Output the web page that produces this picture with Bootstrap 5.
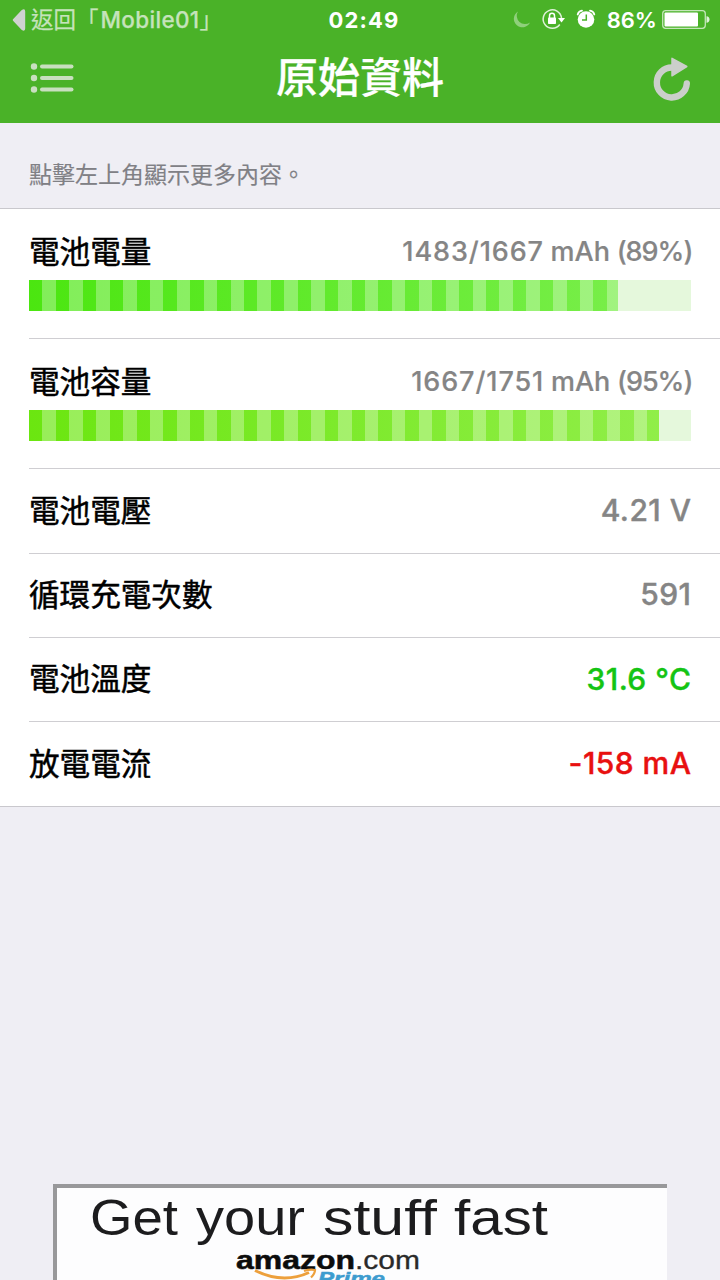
<!DOCTYPE html>
<html lang="zh-Hant">
<head>
<meta charset="utf-8">
<meta name="viewport" content="width=device-width, initial-scale=1">
<title>原始資料</title>
<link href="https://cdn.jsdelivr.net/npm/bootstrap@5.3.0/dist/css/bootstrap.min.css" rel="stylesheet">
<style>
body{font-family:Inter,"Noto Sans CJK TC",sans-serif;background:#efeef4;height:1280px;overflow:hidden;color:#000}
.app-head{height:123px;background:#4ab228;color:#fff}
.status-row{height:40px;line-height:38px}
.status-row>*,.title-row>*{flex:1 1 0}
.status-icons{padding-right:9px}
.back-link{font-size:22.5px;color:#c5e3bb;padding-left:12px;white-space:nowrap;-webkit-text-stroke:.25px #c5e3bb}
.back-link b{font-weight:500;letter-spacing:.3px;margin-left:2px}
.clock{font-size:22px;font-weight:700;letter-spacing:1.2px;padding-left:5px;line-height:39px}
.pct{font-size:22px;font-weight:600;line-height:40px}
.title-row{height:83px}
.page-title{font-size:42px;line-height:76px;font-weight:500;white-space:nowrap;-webkit-text-stroke:.25px #fff}
.hint{height:85px;padding:36px 29px 0;font-size:23px;line-height:32px;color:#808085;-webkit-text-stroke:.15px #808085}
.data-list{border-top:1px solid #c9c8cd;border-bottom:1px solid #c9c8cd;background:#fff;height:599px}
.data-row{margin-left:29px;padding-right:29px;border-bottom:1px solid #cfced2}
.data-row:last-child{border-bottom:0}
.tall{height:130.2px}
.tall .line{height:71px;padding-top:14px}
.short{height:84.3px}
.name{font-size:30.6px;line-height:58px;font-weight:400;-webkit-text-stroke:.5px #000}
.short .name{margin-top:-1px}
.val{font-size:30px;font-weight:500;color:#858585;line-height:58px;letter-spacing:.45px;margin-right:-.4px;margin-top:-2px;white-space:nowrap;-webkit-text-stroke:.4px currentColor}
.tall .val{font-size:27px;margin-top:0;letter-spacing:0;word-spacing:-.5px;-webkit-text-stroke-width:.2px}
.amount{letter-spacing:.9px}
.share{letter-spacing:-1px;margin-right:-1px}
.good{color:#14c414}
.bad{color:#e81010}
.meter{height:31px;border-radius:0;background:#e5f8dc}
.meter .progress-bar{background:repeating-linear-gradient(90deg,transparent 0 13.44px,rgba(255,255,255,.3) 13.44px 26.88px),linear-gradient(90deg,#4be610,#78ee49)}
.meter.lime .progress-bar{background:repeating-linear-gradient(90deg,transparent 0 13.44px,rgba(255,255,255,.3) 13.44px 26.88px),linear-gradient(90deg,#6be610,#90ee48)}
.promo{margin:377px 0 0 53px;width:614px;height:96px;background:#fdfdfe;border-top:4px solid #98989a;border-left:4px solid #98989a}
</style>
</head>
<body>
<header class="app-head">
  <div class="status-row d-flex align-items-center">
    <div class="back-link d-flex align-items-center"><svg width="15" height="22" viewBox="0 0 15 22" class="me-1 flex-shrink-0"><path d="M1.500 9.800 9.500 1.200Q13.200-1 13.200 2.500V19.500Q13.200 23 9.500 20.800L1.500 12.200Q0 11 1.500 9.800Z" fill="#d0d2d0"/></svg><span>返回「<b>Mobile01</b>」</span></div>
    <div class="clock text-center">02:49</div>
    <div class="status-icons d-flex align-items-center justify-content-end">
      <svg width="90" height="26" viewBox="509 7 90 26">
        <path d="M518 11.500A8.500 8.500 0 1 0 530 22.500A8.300 8.300 0 0 1 518 11.500Z" fill="#8fd07b"/>
        <path d="M559.800 24.500A9.200 9.200 0 1 1 561.500 18" fill="none" stroke="#dff1d9" stroke-width="1.500"/>
        <path d="M558 18h7l-3.500 4.500Z" fill="#fff"/>
        <rect x="548" y="17.500" width="8" height="6.500" rx=".8" fill="#fff"/>
        <path d="M549.500 18v-2.200a2.500 2.500 0 0 1 5 0V18" fill="none" stroke="#fff" stroke-width="1.500"/>
        <circle cx="586" cy="19.500" r="8.300" fill="#fff"/>
        <path d="M577.700 14.500Q578.500 11.200 582 10.700M594.300 14.500Q593.500 11.200 590 10.700" fill="none" stroke="#fff" stroke-width="1.800" stroke-linecap="round"/>
        <path d="M586.300 14.500V20H582" fill="none" stroke="#4ab228" stroke-width="1.500"/>
      </svg>
      <span class="pct ms-2">86%</span>
      <svg width="50" height="22" viewBox="661 9 50 22" class="ms-1"><rect x="662.700" y="10.700" width="42.600" height="17.600" rx="3" fill="none" stroke="#c4e6b9" stroke-width="1.300"/><rect x="664.500" y="12.500" width="33.500" height="14" rx="1" fill="#fff"/><path d="M706.500 16.200q3 .3 3 3.300t-3 3.300Z" fill="#dff1d9"/></svg>
    </div>
  </div>
  <div class="title-row d-flex">
    <div><svg width="50" height="40" viewBox="27 60 50 40" style="margin:20px 0 0 27px"><g fill="#c9dfc0"><circle cx="34" cy="66.500" r="3.200"/><circle cx="34" cy="78" r="3.200"/><circle cx="34" cy="89.500" r="3.200"/><rect x="40" y="64.400" width="33.500" height="4.200" rx="2"/><rect x="40" y="75.900" width="33.500" height="4.200" rx="2"/><rect x="40" y="87.400" width="33.500" height="4.200" rx="2"/></g></svg></div>
    <h1 class="page-title text-center m-0">原始資料</h1>
    <div class="text-end"><svg width="46" height="50" viewBox="649 54 46 50" style="margin:14px 25px 0 0"><path d="M686.800 83.500A15 15 0 1 1 672 67.500" fill="none" stroke="#cbcfca" stroke-width="6.400" stroke-linecap="round"/><path d="M672 58.300 686.800 66.500 672 75.800Z" fill="#cbcfca" stroke="#cbcfca" stroke-width="1.500" stroke-linejoin="round"/></svg></div>
  </div>
</header>
<main>
  <div class="hint">點擊左上角顯示更多內容。</div>
  <section class="data-list">
    <div class="data-row tall"><div class="line d-flex justify-content-between"><span class="name">電池電量</span><span class="val"><span class="amount">1483/1667</span> mAh <span class="share">(89%)</span></span></div><div class="progress meter"><div class="progress-bar" style="width:89%"></div></div></div>
    <div class="data-row tall"><div class="line d-flex justify-content-between"><span class="name">電池容量</span><span class="val"><span class="amount">1667/1751</span> mAh <span class="share">(95%)</span></span></div><div class="progress meter lime"><div class="progress-bar" style="width:95.2%"></div></div></div>
    <div class="data-row short d-flex justify-content-between align-items-center"><span class="name">電池電壓</span><span class="val">4.21 V</span></div>
    <div class="data-row short d-flex justify-content-between align-items-center"><span class="name">循環充電次數</span><span class="val">591</span></div>
    <div class="data-row short d-flex justify-content-between align-items-center"><span class="name">電池溫度</span><span class="val good">31.6 °C</span></div>
    <div class="data-row short d-flex justify-content-between align-items-center"><span class="name">放電電流</span><span class="val bad">-158 mA</span></div>
  </section>
  <aside class="promo overflow-hidden">
    <svg class="d-block" width="610" height="92" viewBox="57 1188 610 92" font-family="Liberation Sans, sans-serif">
      <g font-size="50" fill="#1c1c1e">
        <text x="90" y="1234.500" textLength="88" lengthAdjust="spacingAndGlyphs">Get</text>
        <text x="196" y="1234.500" textLength="109" lengthAdjust="spacingAndGlyphs">your</text>
        <text x="323" y="1234.500" textLength="114" lengthAdjust="spacingAndGlyphs">stuff</text>
        <text x="454" y="1234.500" textLength="94" lengthAdjust="spacingAndGlyphs">fast</text>
      </g>
      <text x="236" y="1268.500" font-size="25" font-weight="700" textLength="119" lengthAdjust="spacingAndGlyphs" fill="#0c0c0c" stroke="#0c0c0c" stroke-width=".5">amazon</text>
      <text x="355" y="1268.500" font-size="26" textLength="65" lengthAdjust="spacingAndGlyphs" fill="#2a2a2a" stroke="#2a2a2a" stroke-width=".3">.com</text>
      <path d="M255 1270.500Q283 1284.500 309 1272.500" fill="none" stroke="#eda03c" stroke-width="3"/>
      <path d="M304 1271Q310 1269 315 1270Q315 1273.500 311 1277.500" fill="none" stroke="#eda03c" stroke-width="2.200"/>
      <text x="318" y="1285" font-size="19" font-weight="700" font-style="italic" textLength="67" lengthAdjust="spacingAndGlyphs" fill="#3d9ccf" stroke="#3d9ccf" stroke-width=".5">Prime</text>
    </svg>
  </aside>
</main>
<script src="https://cdn.jsdelivr.net/npm/bootstrap@5.3.0/dist/js/bootstrap.bundle.min.js"></script>
</body>
</html>
